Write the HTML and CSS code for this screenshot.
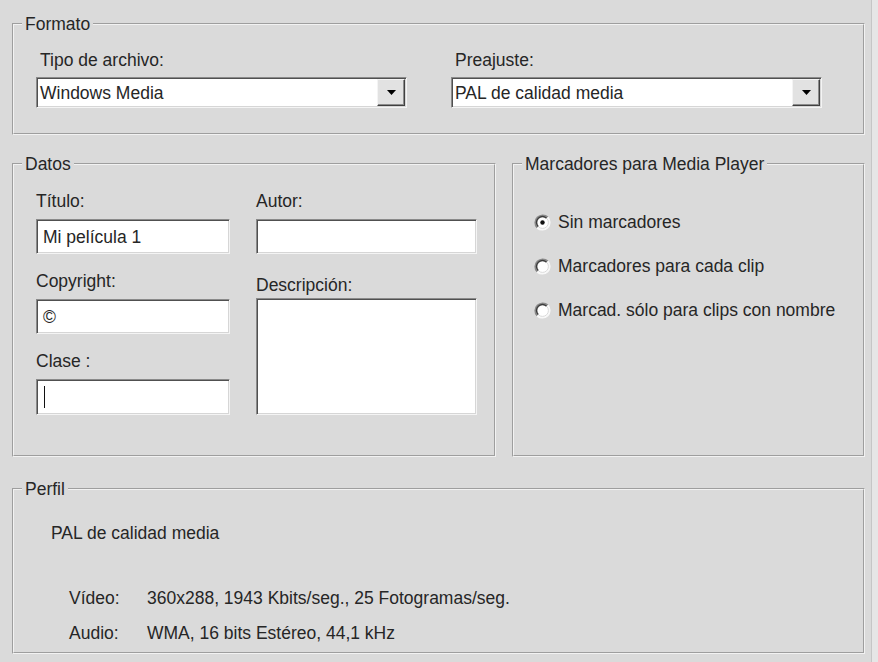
FILE: index.html
```html
<!DOCTYPE html>
<html lang="es">
<head>
<meta charset="utf-8">
<title>Formato</title>
<link rel="stylesheet" href="styles.css">
</head>
<body>
<div class="dialog">
  <fieldset class="group formato">
    <legend>Formato</legend>
    <div class="formato-body">
      <div class="field">
        <div class="lbl">Tipo de archivo:</div>
        <div class="combo">
          <span class="combo-text">Windows Media</span>
          <span class="combo-btn"><svg width="9" height="5" viewBox="0 0 9 5"><path d="M0 0H9L4.5 5Z" fill="#000"/></svg></span>
        </div>
      </div>
      <div class="field">
        <div class="lbl">Preajuste:</div>
        <div class="combo">
          <span class="combo-text">PAL de calidad media</span>
          <span class="combo-btn"><svg width="9" height="5" viewBox="0 0 9 5"><path d="M0 0H9L4.5 5Z" fill="#000"/></svg></span>
        </div>
      </div>
    </div>
  </fieldset>

  <div class="middle">
    <fieldset class="group datos">
      <legend>Datos</legend>
      <div class="datos-body">
        <div class="col col-left">
          <div class="lbl">Título:</div>
          <div class="edit">Mi película 1</div>
          <div class="lbl lbl-next">Copyright:</div>
          <div class="edit">©</div>
          <div class="lbl lbl-next">Clase :</div>
          <div class="edit edit-tall"><span class="caret"></span></div>
        </div>
        <div class="col col-right">
          <div class="lbl">Autor:</div>
          <div class="edit"></div>
          <div class="lbl lbl-desc">Descripción:</div>
          <div class="edit memo"></div>
        </div>
      </div>
    </fieldset>

    <fieldset class="group marcadores">
      <legend>Marcadores para Media Player</legend>
      <div class="radio-list">
        <div class="radio">
          <svg class="radio-icon" width="17" height="17" viewBox="0 0 17 17">
            <circle cx="8.5" cy="8.5" r="7.5" fill="#fff"/>
            <path d="M3.2 13.8A7.5 7.5 0 0 1 13.8 3.2" fill="none" stroke="#8a8a8a" stroke-width="1.6"/>
            <path d="M4.3 12.7A5.9 5.9 0 0 1 12.7 4.3" fill="none" stroke="#3c3c3c" stroke-width="1.5"/>
            <path d="M13.8 3.2A7.5 7.5 0 0 1 3.2 13.8" fill="none" stroke="#f8f8f8" stroke-width="1.6"/>
            <path d="M12.7 4.3A5.9 5.9 0 0 1 4.3 12.7" fill="none" stroke="#dadada" stroke-width="1"/>
            <circle cx="8.5" cy="8.5" r="2.2" fill="#111"/>
          </svg>
          <span>Sin marcadores</span>
        </div>
        <div class="radio">
          <svg class="radio-icon" width="17" height="17" viewBox="0 0 17 17">
            <circle cx="8.5" cy="8.5" r="7.5" fill="#fff"/>
            <path d="M3.2 13.8A7.5 7.5 0 0 1 13.8 3.2" fill="none" stroke="#8a8a8a" stroke-width="1.6"/>
            <path d="M4.3 12.7A5.9 5.9 0 0 1 12.7 4.3" fill="none" stroke="#3c3c3c" stroke-width="1.5"/>
            <path d="M13.8 3.2A7.5 7.5 0 0 1 3.2 13.8" fill="none" stroke="#f8f8f8" stroke-width="1.6"/>
            <path d="M12.7 4.3A5.9 5.9 0 0 1 4.3 12.7" fill="none" stroke="#dadada" stroke-width="1"/>
          </svg>
          <span>Marcadores para cada clip</span>
        </div>
        <div class="radio">
          <svg class="radio-icon" width="17" height="17" viewBox="0 0 17 17">
            <circle cx="8.5" cy="8.5" r="7.5" fill="#fff"/>
            <path d="M3.2 13.8A7.5 7.5 0 0 1 13.8 3.2" fill="none" stroke="#8a8a8a" stroke-width="1.6"/>
            <path d="M4.3 12.7A5.9 5.9 0 0 1 12.7 4.3" fill="none" stroke="#3c3c3c" stroke-width="1.5"/>
            <path d="M13.8 3.2A7.5 7.5 0 0 1 3.2 13.8" fill="none" stroke="#f8f8f8" stroke-width="1.6"/>
            <path d="M12.7 4.3A5.9 5.9 0 0 1 4.3 12.7" fill="none" stroke="#dadada" stroke-width="1"/>
          </svg>
          <span>Marcad. sólo para clips con nombre</span>
        </div>
      </div>
    </fieldset>
  </div>

  <fieldset class="group perfil">
    <legend>Perfil</legend>
    <div class="perfil-body">
      <div class="perfil-name">PAL de calidad media</div>
      <div class="specs">
        <span class="spec-key">Vídeo:</span>
        <span class="spec-val">360x288, 1943 Kbits/seg., 25 Fotogramas/seg.</span>
        <span class="spec-key">Audio:</span>
        <span class="spec-val">WMA, 16 bits Estéreo, 44,1 kHz</span>
      </div>
    </div>
  </fieldset>
</div>
</body>
</html>
```
FILE: styles.css
```css
html, body {
  margin: 0;
  padding: 0;
}

body {
  background: #e6e6e6;
  font-family: "Liberation Sans", Arial, sans-serif;
  font-size: 17.5px;
  line-height: 20px;
  color: #262626;
}

.dialog {
  width: 872px;
  height: 662px;
  box-sizing: border-box;
  padding: 14px 0 0 12px;
  background: #dadada;
  border-right: 1px solid #c6c6c6;
}

.group {
  margin: 0;
  padding: 0;
  min-width: 0;
  border: 2px groove #f2f2f2;
}

.group legend {
  margin-left: 8px;
  padding: 0 3px;
  line-height: 20px;
}

.formato {
  width: 853px;
  box-sizing: border-box;
}

.formato-body {
  display: grid;
  grid-template-columns: 371px 371px;
  column-gap: 44px;
  padding: 16px 0 25px 22px;
}

.lbl {
  height: 20px;
  white-space: nowrap;
}

.field .lbl {
  margin-bottom: 7px;
  padding-left: 4px;
}

.combo {
  display: flex;
  align-items: stretch;
  height: 31px;
  box-sizing: border-box;
  background: #fff;
  border: 1px solid;
  border-color: #8a8a8a #f4f4f4 #f4f4f4 #8a8a8a;
  box-shadow: inset 1px 1px 0 #505050, inset -1px -1px 0 #d6d6d6;
  padding: 1px;
}

.combo-text {
  flex: 1;
  display: flex;
  align-items: center;
  padding-left: 2px;
  white-space: nowrap;
}

.combo-btn {
  width: 28px;
  box-sizing: border-box;
  display: flex;
  align-items: center;
  justify-content: center;
  background: #e2e2e2;
  border: 1px solid;
  border-color: #f4f4f4 #404040 #404040 #f4f4f4;
  box-shadow: inset -1px -1px 0 #8c8c8c;
}

.middle {
  display: grid;
  grid-template-columns: 484px 353px;
  column-gap: 16px;
  width: 853px;
  margin-top: 19px;
}

.datos-body {
  display: grid;
  grid-template-columns: 194px 221px;
  column-gap: 26px;
  padding: 17px 0 40px 22px;
}

.col {
  display: flex;
  flex-direction: column;
}

.col .lbl {
  margin-bottom: 8px;
}

.col .lbl-next {
  margin-top: 17px;
}

.col .lbl-desc {
  margin-top: 21px;
  margin-bottom: 3px;
}

.edit {
  height: 35px;
  box-sizing: border-box;
  display: flex;
  align-items: center;
  padding-left: 6px;
  background: #fff;
  border: 1px solid;
  border-color: #8a8a8a #f4f4f4 #f4f4f4 #8a8a8a;
  box-shadow: inset 1px 1px 0 #505050, inset -1px -1px 0 #d6d6d6;
  white-space: nowrap;
}

.edit-tall {
  height: 36px;
}

.memo {
  height: 117px;
}

.caret {
  display: block;
  width: 0;
  height: 22px;
  margin-left: 1px;
  border-left: 1px solid #111;
}

.radio-list {
  display: flex;
  flex-direction: column;
  row-gap: 24px;
  padding: 38px 0 0 20px;
}

.radio {
  display: flex;
  align-items: center;
  column-gap: 7px;
  height: 20px;
  white-space: nowrap;
}

.radio-icon {
  flex: none;
}

.perfil {
  width: 853px;
  box-sizing: border-box;
  margin-top: 22px;
}

.perfil-body {
  padding: 24px 0 9px 37px;
}

.perfil-name {
  height: 20px;
}

.specs {
  display: grid;
  grid-template-columns: 78px auto;
  row-gap: 15px;
  margin-top: 45px;
  padding-left: 18px;
}

.spec-key,
.spec-val {
  white-space: nowrap;
}
```
